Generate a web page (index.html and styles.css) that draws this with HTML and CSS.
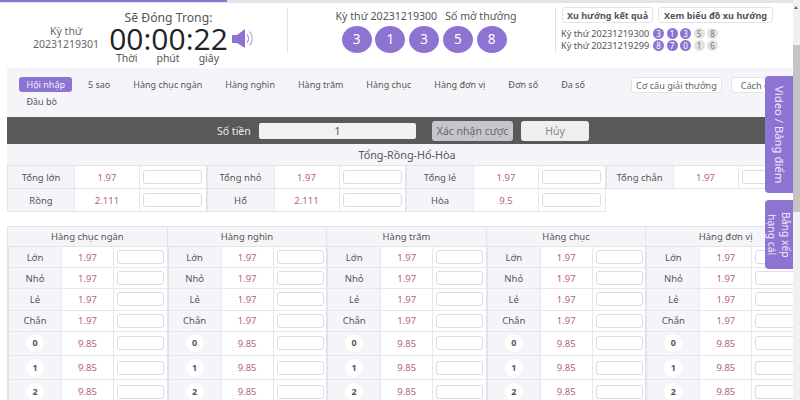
FILE: index.html
```html
<!DOCTYPE html>
<html lang="vi">
<head>
    <meta charset="UTF-8">
    <meta name="viewport" content="width=device-width, initial-scale=1.0">
    <title>Xổ số 5 sao</title>
    <link rel="stylesheet" href="styles.css">
</head>
<body>

    <div class="progress"><div class="progress-fill"></div></div>

    <div class="page">
        <header class="head">
            <div class="issue">Kỳ thứ<br>20231219301</div>
            <div class="timer">
                <div class="timer-title">Sẽ Đóng Trong:</div>
                <div class="clock">00:00:22</div>
                <div class="timer-units"><span>Thời</span><span>phút</span><span>giây</span></div>
            </div>
            <svg class="speaker" width="23" height="19" viewBox="0 0 23 19">
                <path d="M0 6h5v8H0z" fill="#8d74d2"/>
                <path d="M5 6l8-6v19l-8-5z" fill="#8d74d2"/>
                <path d="M15 5.5a6 6 0 0 1 0 8" fill="none" stroke="#a896e0" stroke-width="1.3"/>
                <path d="M17.5 2.5a10 10 0 0 1 0 14" fill="none" stroke="#bcaee8" stroke-width="1.3"/>
            </svg>
            <div class="divider divider-a"></div>
            <div class="draw">
                <div class="draw-title"><span>Kỳ thứ 20231219300</span><span>Số mở thưởng</span></div>
                <div class="balls">
                    <span class="ball">3</span><span class="ball">1</span><span class="ball">3</span><span class="ball">5</span><span class="ball">8</span>
                </div>
            </div>
            <div class="divider"></div>
            <div class="history">
                <div class="history-btns">
                    <button class="btn-small">Xu hướng kết quả</button>
                    <button class="btn-small">Xem biểu đồ xu hướng</button>
                </div>
                <div class="history-row">Kỳ thứ 20231219300
                    <span class="dots"><i class="on">3</i><i class="on">1</i><i class="on">3</i><i>5</i><i>8</i></span>
                </div>
                <div class="history-row">Kỳ thứ 20231219299
                    <span class="dots"><i class="on">8</i><i class="on">7</i><i class="on">0</i><i>1</i><i>6</i></span>
                </div>
            </div>
        </header>

        <nav class="tabs">
            <div class="tab-list">
                <a class="tab active">Hội nhập</a>
                <a class="tab">5 sao</a>
                <a class="tab">Hàng chục ngàn</a>
                <a class="tab">Hàng nghìn</a>
                <a class="tab">Hàng trăm</a>
                <a class="tab">Hàng chục</a>
                <a class="tab">Hàng đơn vị</a>
                <a class="tab">Đơn số</a>
                <a class="tab">Đa số</a>
                <a class="tab">Đầu bò</a>
            </div>
            <div class="tab-btns">
                <button class="btn-rule">Cơ cấu giải thưởng</button>
                <button class="btn-rule btn-how">Cách chơi</button>
            </div>
        </nav>

        <div class="bet-bar">
            <span class="bet-label">Số tiền</span>
            <div class="bet-input">1</div>
            <button class="bet-btn confirm">Xác nhận cược</button>
            <button class="bet-btn cancel">Hủy</button>
        </div>

        <div class="sum-title">Tổng-Rồng-Hổ-Hòa</div>
        <div class="sum-grid" id="sumGrid"></div>

        <div class="col-grid" id="colGrid"></div>
    </div>

    <div class="side-tab side-video">Video / Bảng điểm</div>
    <div class="side-tab side-rank">Bảng xếp<br>hạng cái</div>
    <div class="scrollbar"><div class="scroll-arrow"></div><div class="scroll-thumb"></div></div>

    <script>
        function cell(cls, text) {
            return '<div class="' + cls + '">' + text + '</div>';
        }

        function betCell() {
            return '<div class="c-in"><span class="box"></span></div>';
        }

        // Tổng rows
        const sumData = [
            ['Tổng lớn', '1.97'], ['Tổng nhỏ', '1.97'], ['Tổng lẻ', '1.97'], ['Tổng chẵn', '1.97'],
            ['Rồng', '2.111'], ['Hổ', '2.111'], ['Hòa', '9.5']
        ];
        let sumHtml = '';
        sumData.forEach(item => {
            sumHtml += '<div class="sum-item">' + cell('c-name', item[0]) + cell('c-odd', item[1]) + betCell() + '</div>';
        });
        document.getElementById('sumGrid').innerHTML = sumHtml;

        // Columns
        const cols = ['Hàng chục ngàn', 'Hàng nghìn', 'Hàng trăm', 'Hàng chục', 'Hàng đơn vị'];
        const rows = [['Lớn', '1.97'], ['Nhỏ', '1.97'], ['Lẻ', '1.97'], ['Chẵn', '1.97']];
        let colHtml = '';
        cols.forEach(name => {
            let html = '<div class="col"><div class="col-head">' + name + '</div>';
            rows.forEach(r => {
                html += '<div class="row">' + cell('c-name', r[0]) + cell('c-odd', r[1]) + betCell() + '</div>';
            });
            [0, 1, 2].forEach(n => {
                html += '<div class="row row-num">' + cell('c-name', '<span class="num">' + n + '</span>') + cell('c-odd', '9.85') + betCell() + '</div>';
            });
            colHtml += html + '</div>';
        });
        document.getElementById('colGrid').innerHTML = colHtml;
    </script>

</body>
</html>
```

FILE: styles.css
```css
* {
    box-sizing: border-box;
}
html, body {
    height: 400px;
    overflow: hidden;
}
body {
    margin: 0;
    background-color: white;
    font-family: "Noto Sans", "Open Sans", sans-serif;
    color: #555;
    position: relative;
}
.progress {
    height: 3px;
    background-color: #e4e4e8;
}
.progress-fill {
    width: 227px;
    height: 2px;
    background-color: #8d74d2;
}
.page {
    width: 793px;
    overflow: hidden;
}
.head {
    height: 65px;
    display: flex;
    align-items: flex-start;
}
.head > * {
    flex-shrink: 0;
}
.issue {
    width: 102px;
    padding: 22px 0 0 30px;
    font-size: 10.5px;
    line-height: 13px;
    text-align: center;
    white-space: nowrap;
    color: #666;
}
.timer {
    width: 125px;
    margin-left: 4px;
    text-align: center;
    color: #555;
}
.timer-title {
    font-size: 12.2px;
    line-height: 16px;
    margin-top: 7px;
}
.clock {
    font-family: "Open Sans", sans-serif;
    font-size: 30px;
    line-height: 25px;
    height: 25px;
    color: #222;
    white-space: nowrap;
}
.timer-units {
    display: flex;
    justify-content: center;
    gap: 19px;
    font-size: 10.5px;
    line-height: 14px;
    margin-left: -2px;
}
.speaker {
    margin: 26px 0 0 1px;
}
.divider {
    width: 1px;
    height: 45px;
    margin-top: 5px;
    background-color: #e4e4e8;
}
.divider-a {
    margin-left: 32px;
}
.draw {
    width: 267px;
    padding-left: 5px;
    text-align: center;
}
.draw-title {
    display: flex;
    justify-content: center;
    gap: 8px;
    font-size: 10.6px;
    line-height: 14px;
    margin: 6px 0 0 4px;
    color: #555;
    white-space: nowrap;
}
.balls {
    display: flex;
    justify-content: center;
    gap: 3.75px;
    margin-top: 3px;
}
.ball {
    width: 30px;
    height: 27px;
    border-radius: 50%;
    background-color: #8d74d2;
    color: white;
    font-size: 13.5px;
    line-height: 27px;
}
.history {
    padding-left: 5px;
}
.history-btns {
    display: flex;
    gap: 4px;
    margin: 4px 0 0 1px;
}
.btn-small {
    height: 16px;
    padding: 0 4px;
    border: 1px solid #e2e2e6;
    border-radius: 3px;
    background-color: white;
    font-family: inherit;
    font-size: 9px;
    font-weight: bold;
    color: #555;
    white-space: nowrap;
}
.btn-small + .btn-small {
    padding: 0 5px;
    margin-left: 1px;
    font-size: 9.1px;
}
.history-row {
    display: flex;
    align-items: center;
    gap: 4px;
    height: 12px;
    font-size: 9.2px;
    color: #555;
    white-space: nowrap;
}
.history-btns + .history-row {
    margin-top: 4px;
}
.dots {
    display: flex;
    gap: 2.5px;
}
.dots i {
    width: 11px;
    height: 11px;
    border-radius: 50%;
    background-color: #e2e2e2;
    font-style: normal;
    font-size: 8px;
    line-height: 11px;
    text-align: center;
    color: #777;
}
.dots i.on {
    background-color: #8d74d2;
    color: white;
}
.tabs {
    margin: 0 0 0 7px;
    height: 49px;
    background-color: #f5f5f9;
    display: flex;
    padding: 9px 0 0 12px;
    overflow: hidden;
}
.tab-list {
    width: 612px;
    flex-shrink: 0;
    display: flex;
    flex-wrap: wrap;
    column-gap: 8px;
    row-gap: 2px;
    align-content: flex-start;
}
.tab {
    height: 15px;
    padding: 0 7.5px;
    font-size: 9px;
    line-height: 15px;
    color: #555;
    white-space: nowrap;
}
.tab.active {
    background-color: #8d74d2;
    color: #f3effc;
    border-radius: 3px;
}
.tab-btns {
    display: flex;
    gap: 9px;
    flex-shrink: 0;
    width: 160px;
    overflow: hidden;
}
.btn-rule {
    height: 16px;
    padding: 0 4px;
    border: 1px solid #e4e4e8;
    border-radius: 3px;
    background-color: white;
    font-family: inherit;
    font-size: 9.1px;
    color: #666;
    white-space: nowrap;
    flex-shrink: 0;
}
.btn-how {
    padding: 0 9px;
}
.bet-bar {
    margin-left: 7px;
    height: 27px;
    background-color: #595959;
    display: flex;
    align-items: center;
    padding-left: 210px;
}
.bet-label {
    width: 42px;
    font-size: 10.5px;
    color: #eee;
}
.bet-input {
    width: 157px;
    height: 16px;
    background-color: #f1f1f1;
    border-radius: 2px;
    font-size: 10.5px;
    line-height: 16px;
    text-align: center;
    color: #555;
}
.bet-btn {
    height: 20px;
    border: none;
    border-radius: 3px;
    font-family: inherit;
    font-size: 10.5px;
    color: #777;
}
.confirm {
    width: 81px;
    margin-left: 16px;
    padding: 0;
    background-color: #c4c6cc;
    color: #666;
}
.cancel {
    width: 68px;
    margin-left: 8px;
    background-color: #efefef;
    color: #888;
}
.sum-title {
    margin-left: 7px;
    width: 800px;
    height: 21px;
    background-color: #f5f5f9;
    font-size: 10.8px;
    line-height: 21px;
    text-align: center;
    color: #555;
}
.sum-grid {
    margin-left: 7px;
    width: 800px;
    display: grid;
    grid-template-columns: repeat(4, 199.5px);
    border-top: 1px solid #e4e4e8;
}
.sum-item {
    display: grid;
    grid-template-columns: 67px 66px 66.5px;
    height: 23px;
    border-bottom: 1px solid #e4e4e8;
}
.sum-item .c-in {
    border-right: 1px solid #e4e4e8;
}
.col-grid {
    margin: 14px 0 0 7px;
    width: 800px;
    display: grid;
    grid-template-columns: repeat(5, 159.6px);
    border-top: 1px solid #e4e4e8;
}
.col {
    border-left: 1px solid #e4e4e8;
}
.col-head {
    height: 20px;
    background-color: #f5f5f9;
    border-bottom: 1px solid #e4e4e8;
    font-size: 9.5px;
    line-height: 20px;
    text-align: center;
    color: #555;
}
.row {
    display: grid;
    grid-template-columns: 53px 53px 53px;
    height: 21.2px;
    border-bottom: 1px solid #e8e8ec;
}
.row-num {
    height: 24.2px;
}
.c-name {
    background-color: #f5f5f9;
    display: flex;
    align-items: center;
    justify-content: center;
    font-size: 9.5px;
    color: #555;
    border-left: 1px solid #e4e4e8;
}
.c-odd {
    display: flex;
    align-items: center;
    justify-content: center;
    font-size: 9.5px;
    color: #b8607c;
    border-left: 1px solid #e8e8ec;
    border-right: 1px solid #e8e8ec;
}
.c-in {
    display: flex;
    align-items: center;
    justify-content: center;
}
.box {
    display: block;
    width: 47px;
    height: 14px;
    border: 1px solid #dcdce0;
    border-radius: 3px;
    background-color: white;
}
.sum-item .box {
    width: 59px;
}
.num {
    width: 18px;
    height: 18px;
    border-radius: 50%;
    background-color: white;
    font-size: 9px;
    font-weight: bold;
    line-height: 18px;
    text-align: center;
    color: #555;
}
.side-tab {
    position: absolute;
    left: 765px;
    width: 28px;
    background-color: #8d74d2;
    color: #efeafa;
    border-radius: 4px 0 0 4px;
    writing-mode: vertical-rl;
    display: flex;
    align-items: center;
    justify-content: center;
    text-align: center;
}
.side-video {
    top: 76px;
    height: 117px;
    font-size: 11.3px;
}
.side-rank {
    top: 200px;
    height: 69px;
    font-size: 10.4px;
    line-height: 14px;
}
.scrollbar {
    position: absolute;
    top: 0;
    right: 0;
    width: 7px;
    height: 400px;
    background-color: #f1f1f1;
}
.scroll-arrow {
    margin: 6px 0 0 1px;
    width: 0;
    height: 0;
    border-left: 2.5px solid transparent;
    border-right: 2.5px solid transparent;
    border-bottom: 3px solid #666;
}
.scroll-thumb {
    margin-top: 36px;
    height: 167px;
    background-color: #c4c4c4;
}
```
